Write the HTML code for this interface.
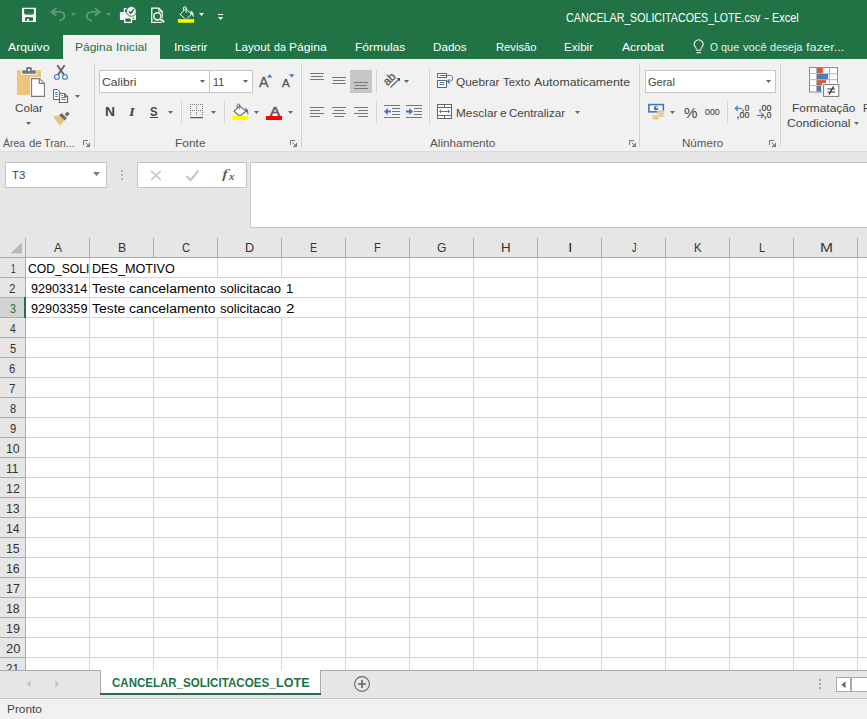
<!DOCTYPE html>
<html lang="pt-BR"><head><meta charset="utf-8"><title>CANCELAR_SOLICITACOES_LOTE.csv - Excel</title>
<style>
html,body{margin:0;padding:0;}
body{width:867px;height:719px;position:relative;overflow:hidden;background:#e6e6e6;font-family:"Liberation Sans",sans-serif;}
.r{position:absolute;display:block;}
.sf{font-family:"Liberation Serif",serif;}
.t{position:absolute;white-space:pre;line-height:1;transform-origin:0 0;display:block;}
svg{overflow:visible;}
</style></head><body>
<div class="r" style="left:0px;top:0px;width:867px;height:59px;background:#217346;"></div>
<div class="r" style="left:0px;top:59px;width:867px;height:92px;background:#f1f1f1;"></div>
<div class="r" style="left:0px;top:151px;width:867px;height:1px;background:#dadada;"></div>
<div class="r" style="left:0px;top:152px;width:867px;height:86px;background:#e6e6e6;"></div>
<div class="r" style="left:63px;top:35px;width:97px;height:24px;background:#f1f1f1;"></div>
<span class="t" style="left:565.76px;top:12.00px;font-size:12px;color:#fff;transform:scaleX(0.8954);">CANCELAR_</span><span class="t" style="left:630.27px;top:12.00px;font-size:12px;color:#fff;transform:scaleX(0.8911);">SOLICITACOES_</span><span class="t" style="left:714.06px;top:12.00px;font-size:12px;color:#fff;transform:scaleX(0.8798);">LOTE.csv </span><span class="t" style="left:763.56px;top:12.00px;font-size:12px;color:#fff;transform:scaleX(1.3333);">- </span><span class="t" style="left:771.93px;top:12.00px;font-size:12px;color:#fff;transform:scaleX(0.9082);">Excel</span>
<span class="t" style="left:8.40px;top:42.00px;font-size:11.3px;color:#fff;transform:scaleX(1.0843);">Arquivo</span>
<span class="t" style="left:173.91px;top:42.00px;font-size:11.3px;color:#fff;transform:scaleX(1.0717);">Inserir</span>
<span class="t" style="left:355.03px;top:42.00px;font-size:11.3px;color:#fff;transform:scaleX(1.0687);">Fórmulas</span>
<span class="t" style="left:433.47px;top:42.00px;font-size:11.3px;color:#fff;transform:scaleX(1.0312);">Dados</span>
<span class="t" style="left:495.60px;top:42.00px;font-size:11.3px;color:#fff;transform:scaleX(0.9946);">Revisão</span>
<span class="t" style="left:564.07px;top:42.00px;font-size:11.3px;color:#fff;transform:scaleX(1.0292);">Exibir</span>
<span class="t" style="left:622.00px;top:42.00px;font-size:11.3px;color:#fff;transform:scaleX(1.0778);">Acrobat</span>
<span class="t" style="left:75.34px;top:42.00px;font-size:11.3px;color:#217346;transform:scaleX(1.0604);">Página </span><span class="t" style="left:115.91px;top:42.00px;font-size:11.3px;color:#217346;transform:scaleX(1.0747);">Inicial</span>
<span class="t" style="left:235.06px;top:42.00px;font-size:11.3px;color:#fff;transform:scaleX(1.0349);">Layout </span><span class="t" style="left:274.08px;top:42.00px;font-size:11.3px;color:#fff;transform:scaleX(0.9375);">da </span><span class="t" style="left:289.23px;top:42.00px;font-size:11.3px;color:#fff;transform:scaleX(1.0721);">Página</span>
<span class="t" style="left:709.99px;top:42.00px;font-size:11.3px;color:#e4efe8;transform:scaleX(0.9106);">O </span><span class="t" style="left:721.06px;top:42.00px;font-size:11.3px;color:#e4efe8;transform:scaleX(0.9670);">que </span><span class="t" style="left:742.50px;top:42.00px;font-size:11.3px;color:#e4efe8;transform:scaleX(0.9889);">você </span><span class="t" style="left:769.76px;top:42.00px;font-size:11.3px;color:#e4efe8;transform:scaleX(0.9760);">deseja </span><span class="t" style="left:805.77px;top:42.00px;font-size:11.3px;color:#e4efe8;transform:scaleX(1.1307);">fazer...</span>
<svg class="r" style="left:693px;top:38.7px" width="12" height="16" viewBox="0 0 12 16"><path d="M3.4 10.6C3.4 9.2 2.8 8.6 2.2 7.9A4.35 4.35 0 1 1 9.1 7.9C8.5 8.6 7.9 9.2 7.9 10.6" fill="none" stroke="#fff" stroke-width="1.05"/><path d="M3.2 11.3H8.1M3.4 13.8H7.9" stroke="#fff" stroke-width="1.1"/></svg>
<svg class="r" style="left:22px;top:8px" width="14" height="14" viewBox="0 0 14 14"><rect x="0" y="-0.2" width="14" height="14.2" rx="0.6" fill="#fff"/><rect x="2.1" y="1.05" width="9.8" height="4.8" fill="#217346"/><rect x="3" y="5.8" width="8" height="0.9" fill="#217346"/><rect x="3" y="9.2" width="8" height="3.6" fill="#217346"/><rect x="5" y="11" width="2" height="1.8" fill="#fff"/></svg>
<svg class="r" style="left:50px;top:7px" width="16" height="15" viewBox="0 0 16 15"><path d="M6.4 1.2L1.4 4.9L6.4 8.6" fill="none" stroke="#5a9a76" stroke-width="2"/><path d="M2 4.9H9.4C12.8 4.9 14.4 7 14.4 9.1C14.4 11.6 12.4 13.3 9.2 13.5" fill="none" stroke="#5a9a76" stroke-width="1.9"/></svg>
<svg class="r" style="left:71px;top:13px" width="5" height="3" viewBox="0 0 5 3"><path d="M0 0H5L2.5 3Z" fill="#5a9a76"/></svg>
<svg class="r" style="left:85px;top:7px" width="16" height="15" viewBox="0 0 16 15"><path d="M9.8 1.2L14.8 4.9L9.8 8.6" fill="none" stroke="#5a9a76" stroke-width="2"/><path d="M14.2 4.9H6.8C3.4 4.9 1.8 7 1.8 9.1C1.8 11.6 3.8 13.3 7 13.5" fill="none" stroke="#5a9a76" stroke-width="1.9"/></svg>
<svg class="r" style="left:106px;top:13px" width="5" height="3" viewBox="0 0 5 3"><path d="M0 0H5L2.5 3Z" fill="#5a9a76"/></svg>
<svg class="r" style="left:119px;top:6px" width="19" height="18" viewBox="0 0 19 18"><path d="M7.6 2.6H5.4V6.4" fill="none" stroke="#fff" stroke-width="1.2"/><rect x="0.9" y="6" width="16.1" height="8.1" rx="1.2" fill="#f4f4f4"/><rect x="5.7" y="11.8" width="6.7" height="4.6" fill="#217346" stroke="#fff" stroke-width="1.3"/><circle cx="14.4" cy="12.4" r=".7" fill="#217346"/><circle cx="12.4" cy="5.4" r="4.9" fill="#f4f4f4" stroke="#217346" stroke-width="0.9"/><path d="M10 5.4L11.8 7.2L15 3.4" fill="none" stroke="#1d5a38" stroke-width="1.4"/></svg>
<svg class="r" style="left:150px;top:6px" width="16" height="18" viewBox="0 0 16 18"><path d="M1.8 2.1H8.8L12.2 5.5V16.4H1.8Z" fill="none" stroke="#fff" stroke-width="1.3"/><path d="M8.8 2.1V5.5H12.2" fill="none" stroke="#fff" stroke-width="1"/><circle cx="7.4" cy="10.3" r="4.9" fill="#217346"/><circle cx="7.4" cy="10.3" r="3.6" fill="#217346" stroke="#f4f4f4" stroke-width="1.6"/><path d="M10.2 13L14.2 16.2" stroke="#217346" stroke-width="3.6"/><path d="M10.2 13L14.2 16.2" stroke="#f4f4f4" stroke-width="2.2"/></svg>
<svg class="r" style="left:177px;top:5px" width="19" height="19" viewBox="0 0 19 19"><path d="M8.9 3.5L14.4 9.3L8.9 14.6L3.1 9.3Z" fill="none" stroke="#fff" stroke-width="1"/><path d="M9.2 7.8V3.2a1.4 1.4 0 0 0-2.8 0V5.4" fill="none" stroke="#fff" stroke-width="1"/><path d="M13.4 5.6c2.6.6 3.7 3.2 3.4 7.2c-1-2.2-1.6-3-3-3.8z" fill="#e9efeb"/><rect x="0.8" y="13.9" width="16.5" height="4.1" fill="#ffff00" stroke="#1a5c38" stroke-width=".5"/></svg>
<svg class="r" style="left:199px;top:13px" width="5" height="3" viewBox="0 0 5 3"><path d="M0 0H5L2.5 3Z" fill="#fff"/></svg>
<svg class="r" style="left:218px;top:13px" width="6" height="8" viewBox="0 0 6 8"><rect x="0" y="1" width="5.2" height="1" fill="#fff"/><path d="M0 4H5.2L2.6 7.1Z" fill="#fff"/></svg>
<div class="r" style="left:94px;top:63px;width:1px;height:84px;background:#d2d2d2;"></div>
<div class="r" style="left:301px;top:63px;width:1px;height:84px;background:#d2d2d2;"></div>
<div class="r" style="left:639px;top:63px;width:1px;height:84px;background:#d2d2d2;"></div>
<div class="r" style="left:780px;top:63px;width:1px;height:84px;background:#d2d2d2;"></div>
<span class="t" style="left:3.20px;top:138.00px;font-size:10.6px;color:#555;transform:scaleX(0.9897);">Área </span><span class="t" style="left:28.94px;top:138.00px;font-size:10.6px;color:#555;transform:scaleX(1.0744);">de </span><span class="t" style="left:44.49px;top:138.00px;font-size:10.6px;color:#555;transform:scaleX(1.0140);">Tran...</span>
<span class="t" style="left:174.54px;top:138.00px;font-size:10.6px;color:#555;transform:scaleX(1.1285);">Fonte</span>
<span class="t" style="left:430.40px;top:138.00px;font-size:10.6px;color:#555;transform:scaleX(1.1086);">Alinhamento</span>
<span class="t" style="left:681.67px;top:138.00px;font-size:10.6px;color:#555;transform:scaleX(1.0941);">Número</span>
<svg class="r" style="left:83px;top:140px" width="7" height="7" viewBox="0 0 7 7"><path d="M0.5 5V0.5H5" fill="none" stroke="#777" stroke-width="1"/><path d="M2.5 2.5L6 6M6.5 3V6.5H3" fill="none" stroke="#777" stroke-width="1"/><path d="M7 3V7H3Z" fill="#777"/></svg>
<svg class="r" style="left:290px;top:140px" width="7" height="7" viewBox="0 0 7 7"><path d="M0.5 5V0.5H5" fill="none" stroke="#777" stroke-width="1"/><path d="M2.5 2.5L6 6M6.5 3V6.5H3" fill="none" stroke="#777" stroke-width="1"/><path d="M7 3V7H3Z" fill="#777"/></svg>
<svg class="r" style="left:629px;top:140px" width="7" height="7" viewBox="0 0 7 7"><path d="M0.5 5V0.5H5" fill="none" stroke="#777" stroke-width="1"/><path d="M2.5 2.5L6 6M6.5 3V6.5H3" fill="none" stroke="#777" stroke-width="1"/><path d="M7 3V7H3Z" fill="#777"/></svg>
<svg class="r" style="left:769px;top:140px" width="7" height="7" viewBox="0 0 7 7"><path d="M0.5 5V0.5H5" fill="none" stroke="#777" stroke-width="1"/><path d="M2.5 2.5L6 6M6.5 3V6.5H3" fill="none" stroke="#777" stroke-width="1"/><path d="M7 3V7H3Z" fill="#777"/></svg>
<svg class="r" style="left:16px;top:66px" width="31" height="32" viewBox="0 0 31 32"><rect x="1" y="3.9" width="24" height="25" rx="1.6" fill="#ebc47f"/><rect x="4.9" y="3" width="16" height="5.9" fill="#f1f1f1"/><rect x="6.2" y="4.2" width="13.7" height="3.5" rx=".6" fill="#777"/><path d="M10.1 5V2.6a1.6 1.6 0 0 1 1.6-1.6h2.6a1.6 1.6 0 0 1 1.6 1.6V5Z" fill="#777"/><rect x="12" y="3.1" width="2" height="1.9" fill="#fafafa"/><path d="M15.6 12.6H23.3L28.4 17.4V30.4H15.6Z" fill="#f1f1f1" stroke="#f1f1f1" stroke-width="3"/><path d="M15.6 12.6H23.3L28.4 17.4V30.4H15.6Z" fill="#fff" stroke="#7a7a7a" stroke-width="1.1"/><path d="M23.3 12.6V17.4H28.4" fill="none" stroke="#7a7a7a" stroke-width="1.1"/></svg>
<span class="t" style="left:15.02px;top:103.00px;font-size:11.5px;color:#444;transform:scaleX(1.0166);">Colar</span>
<svg class="r" style="left:26px;top:122px" width="5" height="3" viewBox="0 0 5 3"><path d="M0 0H5L2.5 3Z" fill="#666"/></svg>
<svg class="r" style="left:53px;top:65px" width="16" height="16" viewBox="0 0 16 16"><path d="M4.3 0.3L10.9 9.8M11.6 0.3L5 9.8" stroke="#666" stroke-width="2" fill="none"/><circle cx="3.9" cy="11.9" r="2.4" fill="#f1f1f1" stroke="#3b78bd" stroke-width="1.1"/><circle cx="12" cy="11.9" r="2.4" fill="#f1f1f1" stroke="#3b78bd" stroke-width="1.1"/></svg>
<svg class="r" style="left:53px;top:89px" width="17" height="16" viewBox="0 0 17 16"><path d="M0.5 0.5H4.5L7 3V10.5H0.5Z" fill="#fff" stroke="#666" stroke-width="1"/><path d="M2.2 3.5H4.8M2.2 5.5H4.8M2.2 7.5H4.8" stroke="#3b78bd" stroke-width="1"/><path d="M6.5 4.5H11.5L14.5 7.5V13.5H6.5Z" fill="#fff" stroke="#666" stroke-width="1.2"/><path d="M11.5 4.5V7.5H14.5" fill="none" stroke="#666" stroke-width="1"/><path d="M8.3 6.5H10.2M8.3 8.5H12.8M8.3 10.5H12.8" stroke="#3b78bd" stroke-width="1"/></svg>
<svg class="r" style="left:75px;top:95px" width="5" height="3" viewBox="0 0 5 3"><path d="M0 0H5L2.5 3Z" fill="#666"/></svg>
<svg class="r" style="left:53px;top:111px" width="17" height="16" viewBox="0 0 17 16"><path d="M0 5.4L6.3 4.2L11.6 9.6L7 14.8Z" fill="#eac282"/><path d="M6.3 4.2L11.6 9.6L13.9 7.3L8.6 1.9Z" fill="#6a6a6a"/><path d="M11.7 3.3L13.9 5.5L16.7 2.7L14.5 0.5Z" fill="#6a6a6a"/></svg>
<div class="r" style="left:99px;top:70px;width:111px;height:23px;background:#fff;box-sizing:border-box;border:1px solid #c6c6c6;"></div>
<div class="r" style="left:210px;top:70px;width:43px;height:23px;background:#fff;box-sizing:border-box;border:1px solid #c6c6c6;border-left:0;"></div>
<span class="t" style="left:102.09px;top:77.00px;font-size:11.5px;color:#444;transform:scaleX(1.0543);">Calibri</span>
<svg class="r" style="left:200px;top:80px" width="5" height="3" viewBox="0 0 5 3"><path d="M0 0H5L2.5 3Z" fill="#666"/></svg>
<span class="t" style="left:213.05px;top:77.00px;font-size:11.5px;color:#444;transform:scaleX(0.9338);">11</span>
<svg class="r" style="left:243px;top:80px" width="5" height="3" viewBox="0 0 5 3"><path d="M0 0H5L2.5 3Z" fill="#666"/></svg>
<span class="t" style="left:259.30px;top:75.00px;font-size:14px;color:#555;transform:scaleX(1.0128);-webkit-text-stroke:0.3px #555;">A</span>
<svg class="r" style="left:267px;top:73.6px" width="6" height="4" viewBox="0 0 6 4"><path d="M0 3.5H5.4L2.7 0.3Z" fill="#3b78bd"/></svg>
<span class="t" style="left:282.00px;top:79.00px;font-size:10px;color:#555;transform:scaleX(1.1493);-webkit-text-stroke:0.3px #555;">A</span>
<svg class="r" style="left:288.8px;top:73.7px" width="6" height="4" viewBox="0 0 6 4"><path d="M0 0.3H5.4L2.7 3.5Z" fill="#3b78bd"/></svg>
<span class="t" style="left:104.97px;top:106.00px;font-size:12px;color:#444;transform:scaleX(1.1528);font-weight:bold;">N</span>
<span class="t sf" style="left:128.55px;top:105.00px;font-size:13px;color:#444;transform:scaleX(1.1449);font-weight:bold;font-style:italic;">I</span>
<span class="t" style="left:150.27px;top:106.00px;font-size:12px;color:#444;transform:scaleX(0.9426);font-weight:bold;">S</span>
<div class="r" style="left:150px;top:117px;width:8px;height:1px;background:#444;"></div>
<svg class="r" style="left:168px;top:111px" width="5" height="3" viewBox="0 0 5 3"><path d="M0 0H5L2.5 3Z" fill="#666"/></svg>
<div class="r" style="left:181px;top:101px;width:1px;height:22px;background:#d2d2d2;"></div>
<svg class="r" style="left:189px;top:104px" width="15" height="15" viewBox="0 0 15 15"><g fill="#777"><rect x="1" y="0" width="1" height="1"/><rect x="7" y="0" width="1" height="1"/><rect x="13" y="0" width="1" height="1"/><rect x="1" y="0" width="1" height="1"/><rect x="1" y="6" width="1" height="1"/><rect x="1" y="2" width="1" height="1"/><rect x="7" y="2" width="1" height="1"/><rect x="13" y="2" width="1" height="1"/><rect x="3" y="0" width="1" height="1"/><rect x="3" y="6" width="1" height="1"/><rect x="1" y="4" width="1" height="1"/><rect x="7" y="4" width="1" height="1"/><rect x="13" y="4" width="1" height="1"/><rect x="5" y="0" width="1" height="1"/><rect x="5" y="6" width="1" height="1"/><rect x="1" y="6" width="1" height="1"/><rect x="7" y="6" width="1" height="1"/><rect x="13" y="6" width="1" height="1"/><rect x="7" y="0" width="1" height="1"/><rect x="7" y="6" width="1" height="1"/><rect x="1" y="8" width="1" height="1"/><rect x="7" y="8" width="1" height="1"/><rect x="13" y="8" width="1" height="1"/><rect x="9" y="0" width="1" height="1"/><rect x="9" y="6" width="1" height="1"/><rect x="1" y="10" width="1" height="1"/><rect x="7" y="10" width="1" height="1"/><rect x="13" y="10" width="1" height="1"/><rect x="11" y="0" width="1" height="1"/><rect x="11" y="6" width="1" height="1"/><rect x="13" y="0" width="1" height="1"/><rect x="13" y="6" width="1" height="1"/></g><rect x="1" y="13" width="13" height="1.2" fill="#555"/></svg>
<svg class="r" style="left:211px;top:111px" width="5" height="3" viewBox="0 0 5 3"><path d="M0 0H5L2.5 3Z" fill="#666"/></svg>
<div class="r" style="left:224px;top:101px;width:1px;height:22px;background:#d2d2d2;"></div>
<svg class="r" style="left:231px;top:103px" width="19" height="18" viewBox="0 0 19 18"><path d="M8.7 2.8L14.9 8.2L8.7 13.2L3.1 8.2Z" fill="#fff" stroke="#666" stroke-width="1.1"/><path d="M8.8 6.1V2.3a1.3 1.3 0 0 0-2.6 0V4.8" fill="none" stroke="#666" stroke-width="1"/><path d="M13.9 4.9C16.8 5.2 17.9 8 17.1 12.4C16.5 10.6 16 9.6 14.9 8.3Z" fill="#3b78bd"/><rect x="1.2" y="13" width="16" height="4" fill="#ffff00"/></svg>
<svg class="r" style="left:254px;top:111px" width="5" height="3" viewBox="0 0 5 3"><path d="M0 0H5L2.5 3Z" fill="#666"/></svg>
<span class="t" style="left:269.60px;top:105.00px;font-size:13.5px;color:#606060;transform:scaleX(1.1056);-webkit-text-stroke:0.7px #606060;">A</span>
<div class="r" style="left:266px;top:116px;width:16px;height:4px;background:#ff0000;"></div>
<svg class="r" style="left:288px;top:111px" width="5" height="3" viewBox="0 0 5 3"><path d="M0 0H5L2.5 3Z" fill="#666"/></svg>
<svg class="r" style="left:310px;top:73px" width="14" height="9" viewBox="0 0 14 9"><rect x="0" y="0" width="14" height="1" fill="#777"/><rect x="1" y="3" width="12" height="1" fill="#777"/><rect x="0" y="6" width="14" height="1" fill="#777"/></svg>
<svg class="r" style="left:332px;top:77px" width="14" height="9" viewBox="0 0 14 9"><rect x="0" y="0" width="14" height="1" fill="#777"/><rect x="1" y="3" width="12" height="1" fill="#777"/><rect x="0" y="6" width="14" height="1" fill="#777"/></svg>
<div class="r" style="left:350px;top:70px;width:22px;height:23px;background:#c6c6c6;"></div>
<svg class="r" style="left:354px;top:82px" width="14" height="9" viewBox="0 0 14 9"><rect x="0" y="0" width="14" height="1" fill="#777"/><rect x="1" y="3" width="12" height="1" fill="#777"/><rect x="0" y="6" width="14" height="1" fill="#777"/></svg>
<div class="r" style="left:376px;top:70px;width:1px;height:22px;background:#d2d2d2;"></div>
<div class="r" style="left:376px;top:101px;width:1px;height:22px;background:#d2d2d2;"></div>
<svg class="r" style="left:310px;top:107px" width="14" height="12" viewBox="0 0 14 12"><rect x="0" y="0" width="14" height="1" fill="#777"/><rect x="0" y="3" width="10" height="1" fill="#777"/><rect x="0" y="6" width="14" height="1" fill="#777"/><rect x="0" y="9" width="10" height="1" fill="#777"/></svg>
<svg class="r" style="left:332px;top:107px" width="14" height="12" viewBox="0 0 14 12"><rect x="0" y="0" width="14" height="1" fill="#777"/><rect x="2" y="3" width="10" height="1" fill="#777"/><rect x="0" y="6" width="14" height="1" fill="#777"/><rect x="2" y="9" width="10" height="1" fill="#777"/></svg>
<svg class="r" style="left:354px;top:107px" width="14" height="12" viewBox="0 0 14 12"><rect x="0" y="0" width="14" height="1" fill="#777"/><rect x="4" y="3" width="10" height="1" fill="#777"/><rect x="0" y="6" width="14" height="1" fill="#777"/><rect x="4" y="9" width="10" height="1" fill="#777"/></svg>
<svg class="r" style="left:382px;top:70px" width="22" height="20" viewBox="0 0 22 20"><text x="0" y="0" transform="translate(5.5,16.2) rotate(-45)" font-family="Liberation Sans,sans-serif" font-size="11.5" fill="#505050" stroke="#505050" stroke-width=".25">ab</text><path d="M8.5 17.4L17.2 8.85" stroke="#505050" stroke-width="1.2"/><path d="M14.6 8.1H18V11.5Z" fill="#505050"/></svg>
<svg class="r" style="left:404px;top:80px" width="5" height="3" viewBox="0 0 5 3"><path d="M0 0H5L2.5 3Z" fill="#666"/></svg>
<svg class="r" style="left:384px;top:105px" width="16" height="13" viewBox="0 0 16 13"><rect x="0" y="0" width="16" height="1" fill="#777"/><rect x="0" y="12" width="16" height="1" fill="#777"/><rect x="8" y="3" width="8" height="1" fill="#777"/><rect x="8" y="6" width="8" height="1" fill="#777"/><rect x="8" y="9" width="8" height="1" fill="#777"/><path d="M7 6.5H3" stroke="#3b78bd" stroke-width="2"/><path d="M3.8 3L0 6.5L3.8 10Z" fill="#3b78bd"/></svg>
<svg class="r" style="left:406px;top:105px" width="16" height="13" viewBox="0 0 16 13"><rect x="0" y="0" width="16" height="1" fill="#777"/><rect x="0" y="12" width="16" height="1" fill="#777"/><rect x="8" y="3" width="8" height="1" fill="#777"/><rect x="8" y="6" width="8" height="1" fill="#777"/><rect x="8" y="9" width="8" height="1" fill="#777"/><path d="M0 6.5H4" stroke="#3b78bd" stroke-width="2"/><path d="M3.2 3L7 6.5L3.2 10Z" fill="#3b78bd"/></svg>
<div class="r" style="left:429px;top:69px;width:1px;height:55px;background:#d2d2d2;"></div>
<svg class="r" style="left:436px;top:72px" width="18" height="17" viewBox="0 0 18 17"><rect x="1.5" y="1.5" width="9" height="4" fill="#fff" stroke="#666"/><rect x="1.5" y="8.5" width="9" height="7" fill="#fff" stroke="#666"/><path d="M3.5 10.5H8.5M3.5 12.5H8.5" stroke="#3b78bd"/><path d="M3.5 3.5H14.4C16.4 3.5 17 5.4 16.6 7C16 9 14.2 9.5 11.8 9.5" fill="none" stroke="#3b78bd" stroke-width="1"/><path d="M13.7 7.3L11.5 9.5L13.7 11.7" fill="none" stroke="#3b78bd" stroke-width="1.1"/></svg>
<span class="t" style="left:455.73px;top:77.00px;font-size:11.5px;color:#444;transform:scaleX(1.0318);">Quebrar </span><span class="t" style="left:502.97px;top:77.00px;font-size:11.5px;color:#444;transform:scaleX(0.9910);">Texto </span><span class="t" style="left:533.60px;top:77.00px;font-size:11.5px;color:#444;transform:scaleX(1.0744);">Automaticamente</span>
<svg class="r" style="left:436px;top:103px" width="17" height="17" viewBox="0 0 17 17"><rect x="1.5" y="1.5" width="14" height="14" fill="#fff" stroke="#666"/><path d="M1.5 4.5H15.5M1.5 12.5H15.5M8.5 1.5V4.5M8.5 12.5V15.5" stroke="#666"/><path d="M3.5 8.5H13.5M5.2 6.8L3.5 8.5L5.2 10.2M11.8 6.8L13.5 8.5L11.8 10.2" fill="none" stroke="#3b78bd"/></svg>
<span class="t" style="left:455.55px;top:108.00px;font-size:11.5px;color:#444;transform:scaleX(1.0284);">Mesclar </span><span class="t" style="left:499.92px;top:108.00px;font-size:11.5px;color:#444;transform:scaleX(1.0507);">e </span><span class="t" style="left:509.12px;top:108.00px;font-size:11.5px;color:#444;transform:scaleX(1.0077);">Centralizar</span>
<svg class="r" style="left:575px;top:111px" width="5" height="3" viewBox="0 0 5 3"><path d="M0 0H5L2.5 3Z" fill="#666"/></svg>
<div class="r" style="left:645px;top:70px;width:131px;height:23px;background:#fff;box-sizing:border-box;border:1px solid #c6c6c6;"></div>
<span class="t" style="left:648.45px;top:77.00px;font-size:11.5px;color:#444;transform:scaleX(0.9541);">Geral</span>
<svg class="r" style="left:766px;top:80px" width="5" height="3" viewBox="0 0 5 3"><path d="M0 0H5L2.5 3Z" fill="#666"/></svg>
<svg class="r" style="left:647px;top:103px" width="19" height="18" viewBox="0 0 19 18"><rect x="1.9" y="1.6" width="14.4" height="7.2" fill="#fff" stroke="#3b78bd" stroke-width="1.6"/><circle cx="9.1" cy="5.2" r="2.3" fill="#3b78bd"/><circle cx="9.9" cy="4.5" r=".9" fill="#fff"/><g fill="#e9bb74" stroke="#f6e6cc" stroke-width=".7"><ellipse cx="13.6" cy="8.6" rx="3.5" ry="1.3"/><ellipse cx="13.6" cy="10.6" rx="3.5" ry="1.3"/><ellipse cx="13.6" cy="12.6" rx="3.5" ry="1.3"/><ellipse cx="8.6" cy="13.2" rx="3.6" ry="1.3"/><ellipse cx="8.6" cy="15.2" rx="3.6" ry="1.3"/></g></svg>
<svg class="r" style="left:670px;top:111px" width="5" height="3" viewBox="0 0 5 3"><path d="M0 0H5L2.5 3Z" fill="#666"/></svg>
<span class="t" style="left:683.84px;top:105.00px;font-size:15px;color:#444;transform:scaleX(1.0120);">%</span>
<span class="t" style="left:704.63px;top:107.00px;font-size:9.4px;color:#444;transform:scaleX(0.9428);-webkit-text-stroke:0.1px #444;">000</span>
<div class="r" style="left:727px;top:101px;width:1px;height:22px;background:#d2d2d2;"></div>
<svg class="r" style="left:734px;top:104px" width="16" height="16" viewBox="0 0 16 16"><path d="M1.4 4.4H7.9" stroke="#3b78bd" stroke-width="1.1"/><path d="M4 1.9L1.3 4.4L4 6.9" fill="none" stroke="#3b78bd" stroke-width="1.2"/><text x="7.2" y="6.9" font-family="Liberation Sans,sans-serif" font-size="12" fill="#333">,</text><text x="10.7" y="6.7" font-family="Liberation Sans,sans-serif" font-size="8.6" fill="#333" stroke="#333" stroke-width=".15" textLength="4.6" lengthAdjust="spacingAndGlyphs">0</text><text x="2.2" y="14.1" font-family="Liberation Sans,sans-serif" font-size="12" fill="#333">,</text><text x="5.5" y="14" font-family="Liberation Sans,sans-serif" font-size="8.6" fill="#333" stroke="#333" stroke-width=".15" textLength="9.8" lengthAdjust="spacingAndGlyphs">00</text></svg>
<svg class="r" style="left:756px;top:104px" width="16" height="16" viewBox="0 0 16 16"><text x="2.2" y="6.9" font-family="Liberation Sans,sans-serif" font-size="12" fill="#333">,</text><text x="5.5" y="6.7" font-family="Liberation Sans,sans-serif" font-size="8.6" fill="#333" stroke="#333" stroke-width=".15" textLength="9.8" lengthAdjust="spacingAndGlyphs">00</text><path d="M1 11.4H7.6" stroke="#3b78bd" stroke-width="1.1"/><path d="M5 8.9L7.7 11.4L5 13.9" fill="none" stroke="#3b78bd" stroke-width="1.2"/><text x="7.4" y="14.1" font-family="Liberation Sans,sans-serif" font-size="12" fill="#333">,</text><text x="10.8" y="14" font-family="Liberation Sans,sans-serif" font-size="8.6" fill="#333" stroke="#333" stroke-width=".15" textLength="4.6" lengthAdjust="spacingAndGlyphs">0</text></svg>
<svg class="r" style="left:808.5px;top:66.5px" width="32" height="31" viewBox="0 0 32 31"><rect x="0.5" y="0.5" width="28" height="24.5" fill="#fff" stroke="#8a8a8a"/><path d="M7.5 0.5V25" stroke="#b5b5b5"/><path d="M14 0.5V25" stroke="#b5b5b5"/><path d="M20.5 0.5V25" stroke="#b5b5b5"/><path d="M0.5 6.6H28.5" stroke="#b5b5b5"/><path d="M0.5 12.7H28.5" stroke="#b5b5b5"/><path d="M0.5 18.6H28.5" stroke="#b5b5b5"/><rect x="8" y="1" width="5.8" height="5.2" fill="#d85c3c"/><rect x="8" y="7" width="11" height="5.3" fill="#4a7ebb"/><rect x="8" y="13.1" width="9" height="5" fill="#d85c3c"/><rect x="8" y="19" width="4.2" height="5.6" fill="#4a7ebb"/><rect x="14" y="17" width="16.5" height="13" fill="#fff" stroke="#f1f1f1" stroke-width="2"/><rect x="14.6" y="17.6" width="15.2" height="11.8" fill="#fff" stroke="#777"/><path d="M18.5 22H26M18.5 25H26M24.6 19.4L20 27.6" stroke="#333" stroke-width="1.2"/></svg>
<span class="t" style="left:791.55px;top:103.00px;font-size:11.5px;color:#444;transform:scaleX(1.0346);">Formatação</span>
<span class="t" style="left:787.19px;top:118.00px;font-size:11.5px;color:#444;transform:scaleX(1.0577);">Condicional</span>
<svg class="r" style="left:854px;top:122px" width="5" height="3" viewBox="0 0 5 3"><path d="M0 0H5L2.5 3Z" fill="#666"/></svg>
<span class="t" style="left:862.97px;top:103.00px;font-size:11.5px;color:#444;transform:scaleX(0.9000);">F</span>
<div class="r" style="left:5px;top:162px;width:102px;height:26px;background:#fff;box-sizing:border-box;border:1px solid #c6c6c6;"></div>
<span class="t" style="left:12.17px;top:170.00px;font-size:11.5px;color:#444;transform:scaleX(0.9863);">T3</span>
<svg class="r" style="left:93px;top:172px" width="7" height="4" viewBox="0 0 7 4"><path d="M0 0H7L3.5 4Z" fill="#777"/></svg>
<div class="r" style="left:121px;top:170px;width:2px;height:2px;background:#b4b4b4;"></div>
<div class="r" style="left:121px;top:174.2px;width:2px;height:2px;background:#b4b4b4;"></div>
<div class="r" style="left:121px;top:178.4px;width:2px;height:2px;background:#b4b4b4;"></div>
<div class="r" style="left:137px;top:162px;width:110px;height:26px;background:#fff;box-sizing:border-box;border:1px solid #c6c6c6;"></div>
<svg class="r" style="left:150px;top:170px" width="12" height="11" viewBox="0 0 12 11"><path d="M1 0.8L10.8 10M10.8 0.8L1 10" stroke="#c8c8c8" stroke-width="1.7"/></svg>
<svg class="r" style="left:185px;top:169px" width="15" height="13" viewBox="0 0 15 13"><path d="M1.4 7L5.6 11L13.6 1.6" fill="none" stroke="#c8c8c8" stroke-width="2.3"/></svg>
<span class="t sf" style="left:222.39px;top:168.00px;font-size:12.5px;color:#505050;transform:scaleX(1.6410);font-style:italic;-webkit-text-stroke:0.12px #505050;">f</span>
<span class="t sf" style="left:228.84px;top:172.00px;font-size:10.5px;color:#505050;transform:scaleX(1.1387);font-style:italic;-webkit-text-stroke:0.12px #505050;">x</span>
<div class="r" style="left:250px;top:162px;width:620px;height:66px;background:#fff;box-sizing:border-box;border:1px solid #c6c6c6;"></div>
<div class="r" style="left:0px;top:238px;width:867px;height:432px;background:#fff;"></div>
<div class="r" style="left:0px;top:238px;width:867px;height:19px;background:#e6e6e6;"></div>
<div class="r" style="left:0px;top:257px;width:25px;height:413px;background:#e6e6e6;"></div>
<div class="r" style="left:0px;top:297px;width:25px;height:20px;background:#d2d2d2;"></div>
<svg class="r" style="left:10px;top:242px" width="12" height="12" viewBox="0 0 12 12"><path d="M12 0.5V11.5H0.5Z" fill="#b7b7b7"/></svg>
<div class="r" style="left:25px;top:238px;width:1px;height:19px;background:#ababab;"></div>
<div class="r" style="left:25px;top:258px;width:1px;height:412px;background:#ababab;"></div>
<div class="r" style="left:89px;top:238px;width:1px;height:19px;background:#ababab;"></div>
<div class="r" style="left:89px;top:258px;width:1px;height:412px;background:#d4d4d4;"></div>
<div class="r" style="left:153px;top:238px;width:1px;height:19px;background:#ababab;"></div>
<div class="r" style="left:153px;top:258px;width:1px;height:412px;background:#d4d4d4;"></div>
<div class="r" style="left:217px;top:238px;width:1px;height:19px;background:#ababab;"></div>
<div class="r" style="left:217px;top:258px;width:1px;height:412px;background:#d4d4d4;"></div>
<div class="r" style="left:281px;top:238px;width:1px;height:19px;background:#ababab;"></div>
<div class="r" style="left:281px;top:258px;width:1px;height:412px;background:#d4d4d4;"></div>
<div class="r" style="left:345px;top:238px;width:1px;height:19px;background:#ababab;"></div>
<div class="r" style="left:345px;top:258px;width:1px;height:412px;background:#d4d4d4;"></div>
<div class="r" style="left:409px;top:238px;width:1px;height:19px;background:#ababab;"></div>
<div class="r" style="left:409px;top:258px;width:1px;height:412px;background:#d4d4d4;"></div>
<div class="r" style="left:473px;top:238px;width:1px;height:19px;background:#ababab;"></div>
<div class="r" style="left:473px;top:258px;width:1px;height:412px;background:#d4d4d4;"></div>
<div class="r" style="left:537px;top:238px;width:1px;height:19px;background:#ababab;"></div>
<div class="r" style="left:537px;top:258px;width:1px;height:412px;background:#d4d4d4;"></div>
<div class="r" style="left:601px;top:238px;width:1px;height:19px;background:#ababab;"></div>
<div class="r" style="left:601px;top:258px;width:1px;height:412px;background:#d4d4d4;"></div>
<div class="r" style="left:665px;top:238px;width:1px;height:19px;background:#ababab;"></div>
<div class="r" style="left:665px;top:258px;width:1px;height:412px;background:#d4d4d4;"></div>
<div class="r" style="left:729px;top:238px;width:1px;height:19px;background:#ababab;"></div>
<div class="r" style="left:729px;top:258px;width:1px;height:412px;background:#d4d4d4;"></div>
<div class="r" style="left:793px;top:238px;width:1px;height:19px;background:#ababab;"></div>
<div class="r" style="left:793px;top:258px;width:1px;height:412px;background:#d4d4d4;"></div>
<div class="r" style="left:857px;top:238px;width:1px;height:19px;background:#ababab;"></div>
<div class="r" style="left:857px;top:258px;width:1px;height:412px;background:#d4d4d4;"></div>
<div class="r" style="left:26px;top:277px;width:841px;height:1px;background:#d4d4d4;"></div>
<div class="r" style="left:0px;top:277px;width:25px;height:1px;background:#ababab;"></div>
<div class="r" style="left:26px;top:297px;width:841px;height:1px;background:#d4d4d4;"></div>
<div class="r" style="left:0px;top:297px;width:25px;height:1px;background:#ababab;"></div>
<div class="r" style="left:26px;top:317px;width:841px;height:1px;background:#d4d4d4;"></div>
<div class="r" style="left:0px;top:317px;width:25px;height:1px;background:#ababab;"></div>
<div class="r" style="left:26px;top:337px;width:841px;height:1px;background:#d4d4d4;"></div>
<div class="r" style="left:0px;top:337px;width:25px;height:1px;background:#ababab;"></div>
<div class="r" style="left:26px;top:357px;width:841px;height:1px;background:#d4d4d4;"></div>
<div class="r" style="left:0px;top:357px;width:25px;height:1px;background:#ababab;"></div>
<div class="r" style="left:26px;top:377px;width:841px;height:1px;background:#d4d4d4;"></div>
<div class="r" style="left:0px;top:377px;width:25px;height:1px;background:#ababab;"></div>
<div class="r" style="left:26px;top:397px;width:841px;height:1px;background:#d4d4d4;"></div>
<div class="r" style="left:0px;top:397px;width:25px;height:1px;background:#ababab;"></div>
<div class="r" style="left:26px;top:417px;width:841px;height:1px;background:#d4d4d4;"></div>
<div class="r" style="left:0px;top:417px;width:25px;height:1px;background:#ababab;"></div>
<div class="r" style="left:26px;top:437px;width:841px;height:1px;background:#d4d4d4;"></div>
<div class="r" style="left:0px;top:437px;width:25px;height:1px;background:#ababab;"></div>
<div class="r" style="left:26px;top:457px;width:841px;height:1px;background:#d4d4d4;"></div>
<div class="r" style="left:0px;top:457px;width:25px;height:1px;background:#ababab;"></div>
<div class="r" style="left:26px;top:477px;width:841px;height:1px;background:#d4d4d4;"></div>
<div class="r" style="left:0px;top:477px;width:25px;height:1px;background:#ababab;"></div>
<div class="r" style="left:26px;top:497px;width:841px;height:1px;background:#d4d4d4;"></div>
<div class="r" style="left:0px;top:497px;width:25px;height:1px;background:#ababab;"></div>
<div class="r" style="left:26px;top:517px;width:841px;height:1px;background:#d4d4d4;"></div>
<div class="r" style="left:0px;top:517px;width:25px;height:1px;background:#ababab;"></div>
<div class="r" style="left:26px;top:537px;width:841px;height:1px;background:#d4d4d4;"></div>
<div class="r" style="left:0px;top:537px;width:25px;height:1px;background:#ababab;"></div>
<div class="r" style="left:26px;top:557px;width:841px;height:1px;background:#d4d4d4;"></div>
<div class="r" style="left:0px;top:557px;width:25px;height:1px;background:#ababab;"></div>
<div class="r" style="left:26px;top:577px;width:841px;height:1px;background:#d4d4d4;"></div>
<div class="r" style="left:0px;top:577px;width:25px;height:1px;background:#ababab;"></div>
<div class="r" style="left:26px;top:597px;width:841px;height:1px;background:#d4d4d4;"></div>
<div class="r" style="left:0px;top:597px;width:25px;height:1px;background:#ababab;"></div>
<div class="r" style="left:26px;top:617px;width:841px;height:1px;background:#d4d4d4;"></div>
<div class="r" style="left:0px;top:617px;width:25px;height:1px;background:#ababab;"></div>
<div class="r" style="left:26px;top:637px;width:841px;height:1px;background:#d4d4d4;"></div>
<div class="r" style="left:0px;top:637px;width:25px;height:1px;background:#ababab;"></div>
<div class="r" style="left:26px;top:657px;width:841px;height:1px;background:#d4d4d4;"></div>
<div class="r" style="left:0px;top:657px;width:25px;height:1px;background:#ababab;"></div>
<div class="r" style="left:0px;top:257px;width:867px;height:1px;background:#ababab;"></div>
<span class="t" style="left:54.10px;top:242.00px;font-size:12px;color:#333;transform:scaleX(0.9950);">A</span>
<span class="t" style="left:117.82px;top:242.00px;font-size:12px;color:#333;transform:scaleX(1.0185);">B</span>
<span class="t" style="left:181.94px;top:242.00px;font-size:12px;color:#333;transform:scaleX(0.9375);">C</span>
<span class="t" style="left:245.29px;top:242.00px;font-size:12px;color:#333;transform:scaleX(1.0556);">D</span>
<span class="t" style="left:310.36px;top:242.00px;font-size:12px;color:#333;transform:scaleX(0.8788);">E</span>
<span class="t" style="left:374.40px;top:242.00px;font-size:12px;color:#333;transform:scaleX(0.9333);">F</span>
<span class="t" style="left:437.49px;top:242.00px;font-size:12px;color:#333;transform:scaleX(1.0101);">G</span>
<span class="t" style="left:501.23px;top:242.00px;font-size:12px;color:#333;transform:scaleX(1.1111);">H</span>
<span class="t" style="left:567.86px;top:242.00px;font-size:12px;color:#333;transform:scaleX(1.3333);">I</span>
<span class="t" style="left:632.11px;top:242.00px;font-size:12px;color:#333;transform:scaleX(0.7540);">J</span>
<span class="t" style="left:693.89px;top:242.00px;font-size:12px;color:#333;transform:scaleX(0.9483);">K</span>
<span class="t" style="left:758.71px;top:242.00px;font-size:12px;color:#333;transform:scaleX(0.9259);">L</span>
<span class="t" style="left:819.55px;top:242.00px;font-size:12px;color:#333;transform:scaleX(1.2990);">M</span>
<span class="t" style="left:10.63px;top:263.00px;font-size:12px;color:#333;transform:scaleX(0.6818);">1</span>
<span class="t" style="left:9.47px;top:283.00px;font-size:12px;color:#333;transform:scaleX(0.9601);">2</span>
<span class="t" style="left:9.73px;top:303.00px;font-size:12px;color:#217346;transform:scaleX(0.9014);">3</span>
<span class="t" style="left:9.84px;top:323.00px;font-size:12px;color:#333;transform:scaleX(0.8660);">4</span>
<span class="t" style="left:9.61px;top:343.00px;font-size:12px;color:#333;transform:scaleX(0.9201);">5</span>
<span class="t" style="left:9.49px;top:363.00px;font-size:12px;color:#333;transform:scaleX(0.9397);">6</span>
<span class="t" style="left:9.47px;top:383.00px;font-size:12px;color:#333;transform:scaleX(0.9601);">7</span>
<span class="t" style="left:9.61px;top:403.00px;font-size:12px;color:#333;transform:scaleX(0.9201);">8</span>
<span class="t" style="left:9.60px;top:423.00px;font-size:12px;color:#333;transform:scaleX(0.9397);">9</span>
<span class="t" style="left:6.34px;top:443.00px;font-size:12px;color:#333;transform:scaleX(1.0270);">10</span>
<span class="t" style="left:6.36px;top:463.00px;font-size:12px;color:#333;transform:scaleX(1.0033);">11</span>
<span class="t" style="left:6.33px;top:483.00px;font-size:12px;color:#333;transform:scaleX(1.0373);">12</span>
<span class="t" style="left:6.34px;top:503.00px;font-size:12px;color:#333;transform:scaleX(1.0270);">13</span>
<span class="t" style="left:6.35px;top:523.00px;font-size:12px;color:#333;transform:scaleX(1.0169);">14</span>
<span class="t" style="left:6.34px;top:543.00px;font-size:12px;color:#333;transform:scaleX(1.0270);">15</span>
<span class="t" style="left:6.34px;top:563.00px;font-size:12px;color:#333;transform:scaleX(1.0270);">16</span>
<span class="t" style="left:6.33px;top:583.00px;font-size:12px;color:#333;transform:scaleX(1.0373);">17</span>
<span class="t" style="left:6.34px;top:603.00px;font-size:12px;color:#333;transform:scaleX(1.0270);">18</span>
<span class="t" style="left:6.33px;top:623.00px;font-size:12px;color:#333;transform:scaleX(1.0373);">19</span>
<span class="t" style="left:5.65px;top:643.00px;font-size:12px;color:#333;transform:scaleX(1.0801);">20</span>
<span class="t" style="left:5.71px;top:663.00px;font-size:12px;color:#333;transform:scaleX(0.9841);">21</span>
<div class="r" style="left:24px;top:297px;width:2px;height:21px;background:#217346;"></div>
<div class="r" style="left:90px;top:258px;width:127px;height:19px;background:#fff;"></div>
<div class="r" style="left:90px;top:278px;width:255px;height:19px;background:#fff;"></div>
<div class="r" style="left:90px;top:298px;width:255px;height:19px;background:#fff;"></div>
<span class="t" style="left:27.89px;top:263.00px;font-size:12px;color:#000;transform:scaleX(1.0113);">COD_SOLI</span>
<span class="t" style="left:91.59px;top:263.00px;font-size:12px;color:#000;transform:scaleX(1.0526);">DES_MOTIVO</span>
<span class="t" style="left:31.09px;top:283.00px;font-size:12px;color:#000;transform:scaleX(1.0533);">92903314</span>
<span class="t" style="left:31.09px;top:303.00px;font-size:12px;color:#000;transform:scaleX(1.0581);">92903359</span>
<span class="t" style="left:91.52px;top:283.00px;font-size:12px;color:#000;transform:scaleX(1.1604);">Teste </span><span class="t" style="left:128.84px;top:283.00px;font-size:12px;color:#000;transform:scaleX(1.1586);">cancelamento </span><span class="t" style="left:219.74px;top:283.00px;font-size:12px;color:#000;transform:scaleX(1.0894);">solicitacao </span><span class="t" style="left:286.28px;top:283.00px;font-size:12px;color:#000;transform:scaleX(1.0985);">1</span>
<span class="t" style="left:91.52px;top:303.00px;font-size:12px;color:#000;transform:scaleX(1.1604);">Teste </span><span class="t" style="left:128.84px;top:303.00px;font-size:12px;color:#000;transform:scaleX(1.1586);">cancelamento </span><span class="t" style="left:219.74px;top:303.00px;font-size:12px;color:#000;transform:scaleX(1.0894);">solicitacao </span><span class="t" style="left:285.64px;top:303.00px;font-size:12px;color:#000;transform:scaleX(1.2681);">2</span>
<div class="r" style="left:0px;top:670px;width:867px;height:28px;background:#e6e6e6;"></div>
<div class="r" style="left:0px;top:670px;width:867px;height:1px;background:#ababab;"></div>
<div class="r" style="left:0px;top:698px;width:867px;height:21px;background:#f1f1f1;"></div>
<div class="r" style="left:0px;top:698px;width:867px;height:1px;background:#c6c6c6;"></div>
<div class="r" style="left:100px;top:670px;width:221px;height:23px;background:#fff;box-sizing:border-box;border-left:1px solid #ababab;border-right:1px solid #ababab;"></div>
<div class="r" style="left:100px;top:693px;width:221px;height:2px;background:#217346;"></div>
<span class="t" style="left:112.24px;top:677.00px;font-size:12.5px;color:#217346;transform:scaleX(0.9210);font-weight:bold;">CANCELAR_</span><span class="t" style="left:183.47px;top:677.00px;font-size:12.5px;color:#217346;transform:scaleX(0.9278);font-weight:bold;">SOLICITACOES_</span><span class="t" style="left:275.75px;top:677.00px;font-size:12.5px;color:#217346;transform:scaleX(1.0056);font-weight:bold;">LOTE</span>
<svg class="r" style="left:26px;top:680px" width="5" height="8" viewBox="0 0 5 8"><path d="M4.5 0.3V7.3L0.5 3.8Z" fill="#c4c4c4"/></svg>
<svg class="r" style="left:55px;top:680px" width="5" height="8" viewBox="0 0 5 8"><path d="M0.5 0.3V7.3L4.5 3.8Z" fill="#c4c4c4"/></svg>
<svg class="r" style="left:353px;top:675px" width="18" height="18" viewBox="0 0 18 18"><circle cx="9" cy="9" r="7.4" fill="none" stroke="#666" stroke-width="1.1"/><path d="M5 9H13M9 5V13" stroke="#666" stroke-width="1.6"/></svg>
<div class="r" style="left:819px;top:679px;width:1.6px;height:1.6px;background:#a6a6a6;"></div>
<div class="r" style="left:819px;top:683.2px;width:1.6px;height:1.6px;background:#a6a6a6;"></div>
<div class="r" style="left:819px;top:687.4px;width:1.6px;height:1.6px;background:#a6a6a6;"></div>
<div class="r" style="left:836px;top:677px;width:15px;height:15px;background:#fff;box-sizing:border-box;border:1px solid #ababab;"></div>
<svg class="r" style="left:841px;top:681px" width="5" height="8" viewBox="0 0 5 8"><path d="M4.5 0.3V7.3L0.5 3.8Z" fill="#666"/></svg>
<div class="r" style="left:851px;top:677px;width:20px;height:15px;background:#fff;box-sizing:border-box;border:1px solid #ababab;"></div>
<span class="t" style="left:6.65px;top:704.00px;font-size:10.6px;color:#444;transform:scaleX(1.1200);">Pronto</span>
</body></html>
